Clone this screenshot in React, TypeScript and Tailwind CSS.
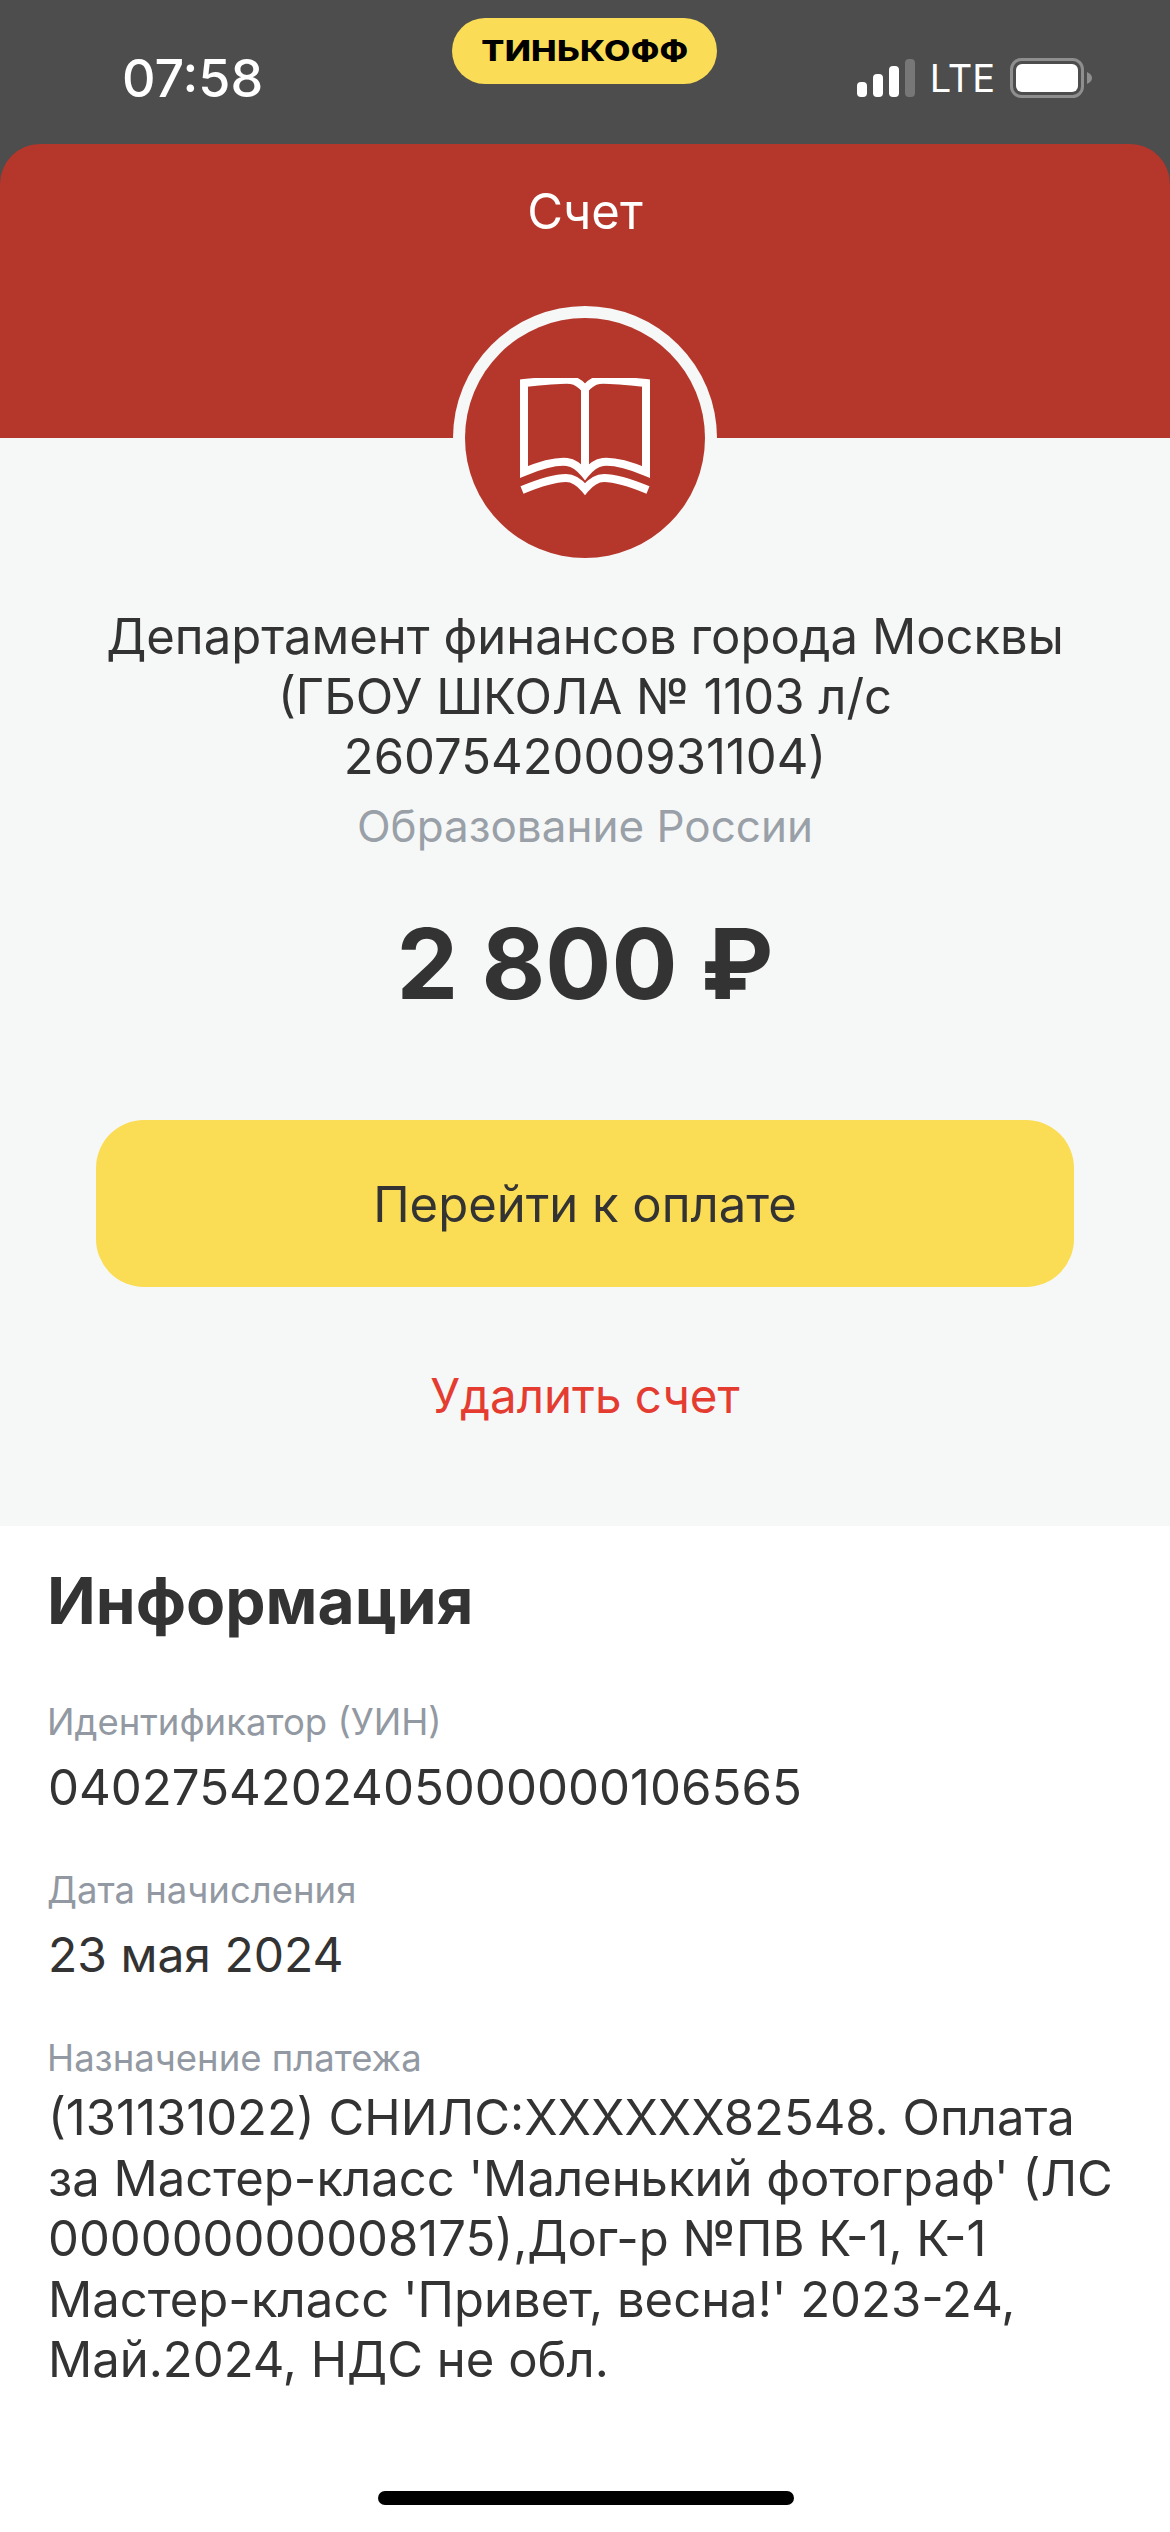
export default function App() {
  return (
    <div className="w-[1170px] h-[2532px] bg-white flex flex-col overflow-hidden font-['Inter',sans-serif] text-[#333333]">
      <div className="bg-[#4d4d4d]">
        <div className="h-[144px] flex items-start justify-between relative">
          <span className="ml-[122px] mt-[51px] text-[52px] leading-[56px] font-medium text-white">07:58</span>
          <div className="absolute left-[452px] top-[18px] w-[265px] h-[66px] rounded-[33px] bg-[#fbdc56] flex items-center justify-center">
            <span className="text-[28px] font-extrabold text-black tracking-[0.2px] leading-none scale-x-[1.22]">ТИНЬКОФФ</span>
          </div>
          <div className="mt-[58px] mr-[78px] flex items-center">
            <svg width="58" height="38" viewBox="0 0 58 38" className="mr-[15px]">
              <rect x="0" y="23" width="10" height="15" rx="4" fill="#fff" />
              <rect x="16" y="15" width="10" height="23" rx="4" fill="#fff" />
              <rect x="32" y="7" width="10" height="31" rx="4" fill="#fff" />
              <rect x="48" y="0" width="10" height="38" rx="4" fill="#777" />
            </svg>
            <span className="text-[38px] leading-[38px] text-white mr-[15px]">LTE</span>
            <svg width="82" height="40" viewBox="0 0 82 40">
              <rect x="1.5" y="1.5" width="71" height="37" rx="10" fill="none" stroke="#8e8e8e" strokeWidth="3" />
              <rect x="6" y="6" width="62" height="28" rx="6" fill="#fff" />
              <path d="M77 14 C81 16 82 18 82 20 C82 22 81 24 77 26 Z" fill="#8e8e8e" />
            </svg>
          </div>
        </div>
        <div className="rounded-t-[40px] bg-[#b5372c]">
          <div className="h-[294px] relative flex justify-center">
            <span className="mt-[38px] text-[49px] leading-[60px] text-white">Счет</span>
            <div className="absolute left-[453px] top-[162px] w-[264px] h-[132px] rounded-t-[132px] bg-[#f6f8f7]"></div>
            <div className="absolute left-[465px] top-[174px] w-[240px] h-[240px] rounded-full bg-[#b5372c] flex items-center justify-center z-10">
              <svg width="132" height="120" viewBox="0 0 132 120" fill="none" stroke="#fff">
                <path d="M5 5 C25 3 45 1 52 2 C58 3 62 6 66 11 C70 6 74 3 80 2 C87 1 107 3 127 5 V94 C110 87 95 83 84 84 C76 85 70 91 66 96 C62 91 56 85 48 84 C37 83 22 87 5 94 Z" strokeWidth="8" />
                <path d="M66 11 V94" strokeWidth="8" />
                <path d="M3 112 C20 105 35 100 47 100 C55 100 61 105 66 111 C71 105 77 100 85 100 C97 100 112 105 129 112" strokeWidth="8" />
              </svg>
            </div>
          </div>
        </div>
      </div>
      <div className="bg-[#f6f8f7] h-[1088px] flex flex-col items-center shrink-0">
        <div className="mt-[169px] w-[1020px] text-center text-[49px] leading-[60px]">
          Департамент финансов города Москвы (ГБОУ ШКОЛА № 1103 л/с 2607542000931104)
        </div>
        <div className="mt-[9px] text-[44px] leading-[60px] text-[#9aa0a8]">Образование России</div>
        <div className="mt-[48px] text-[98px] leading-[120px] font-bold">2 800 ₽</div>
        <div className="mt-[96px] w-[978px] h-[167px] rounded-[48px] bg-[#fadc55] flex items-center justify-center text-[49px] pt-[3px]">Перейти к оплате</div>
        <div className="mt-[79px] text-[47.5px] leading-[60px] text-[#e53c32]">Удалить счет</div>
      </div>
      <div className="flex-1 bg-white pl-[47px] pr-[40px] relative">
        <div className="mt-[40px] text-[64px] leading-[70px] font-bold">Информация</div>
        <div className="mt-[62px] text-[36.5px] leading-[48px] text-[#9299a2]">Идентификатор (УИН)</div>
        <div className="mt-[11px] text-[49.2px] leading-[60px] ml-[1px]">0402754202405000000106565</div>
        <div className="mt-[49px] text-[36.5px] leading-[48px] text-[#9299a2]">Дата начисления</div>
        <div className="mt-[11px] text-[48px] leading-[60px] ml-[1px]">23 мая 2024</div>
        <div className="mt-[49px] text-[36.5px] leading-[48px] text-[#9299a2]">Назначение платежа</div>
        <div className="mt-[6px] text-[49px] leading-[60.5px] ml-[1px]">(131131022) СНИЛС:XXXXXX82548. Оплата за Мастер-класс 'Маленький фотограф' (ЛС 000000000008175),Дог-р №ПВ К-1, К-1 Мастер-класс 'Привет, весна!' 2023-24, Май.2024, НДС не обл.</div>
        <div className="absolute left-[378px] top-[965px] w-[416px] h-[14px] rounded-full bg-black"></div>
      </div>
    </div>
  );
}
